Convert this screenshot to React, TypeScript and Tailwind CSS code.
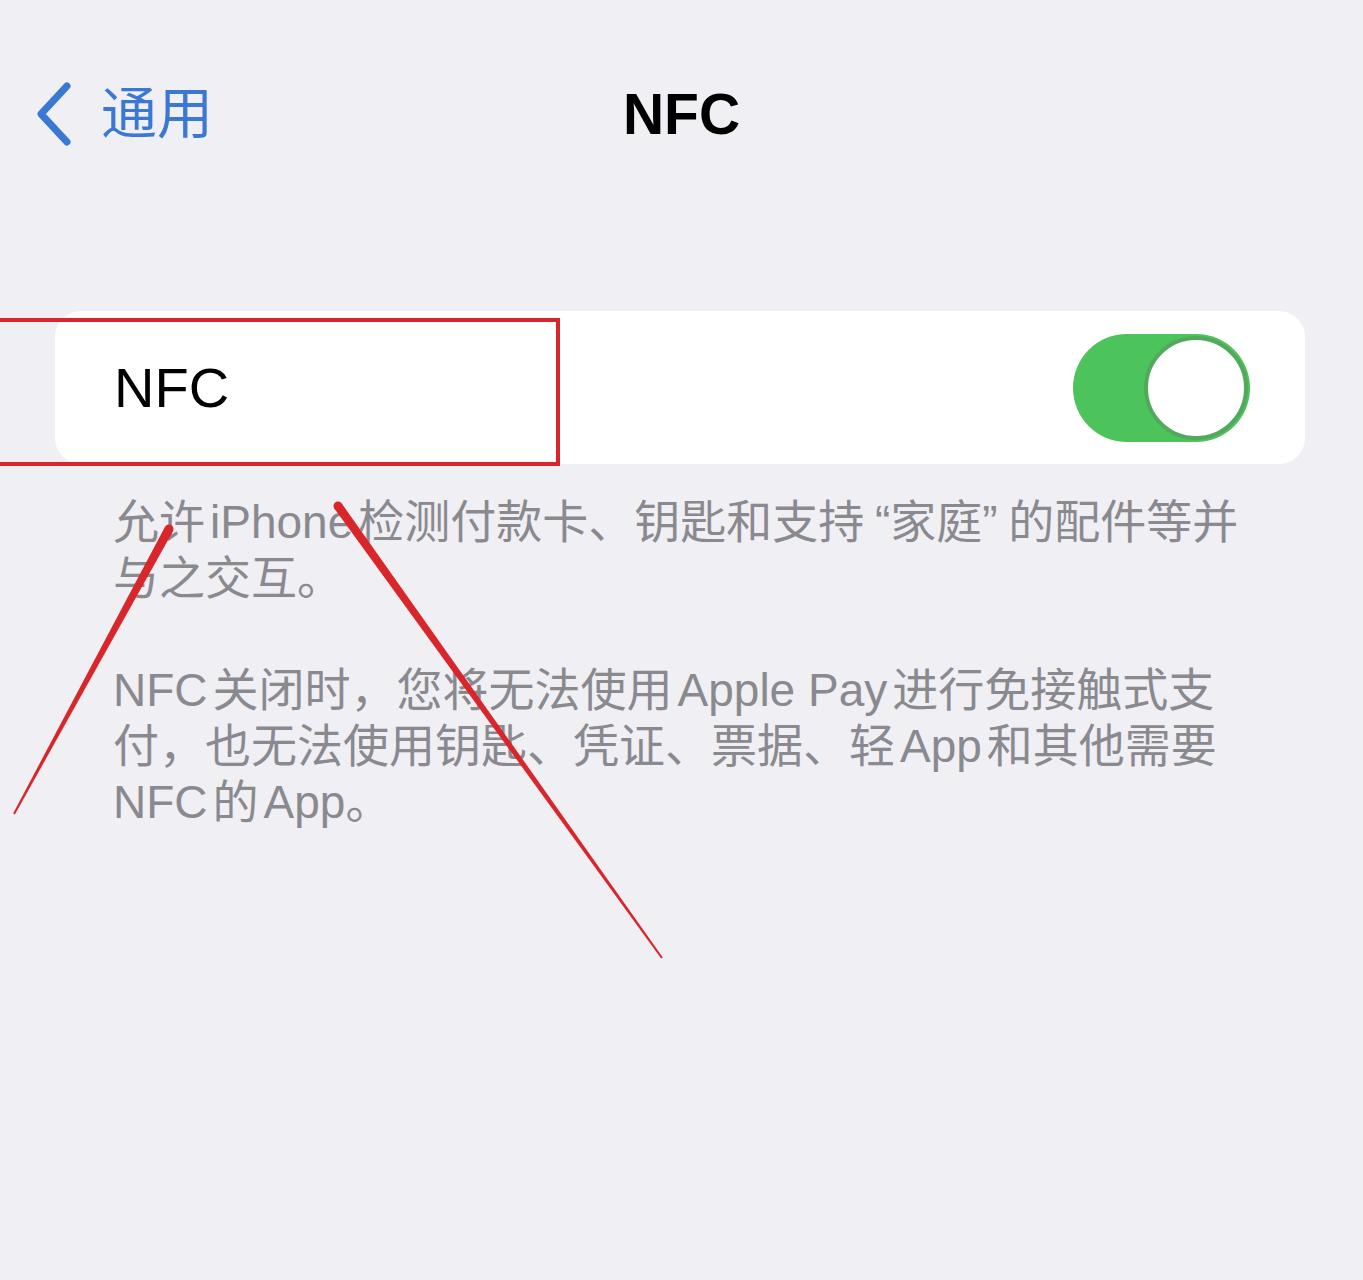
import React from "react";

const font = { fontFamily: '"Liberation Sans", "Noto Sans CJK SC", sans-serif' };

// tapered brush stroke: thick at the tip, thin at the tail
function Stroke({ tip, tail, w0, w1 }: { tip: [number, number]; tail: [number, number]; w0: number; w1: number }) {
  const dx = tail[0] - tip[0];
  const dy = tail[1] - tip[1];
  const len = Math.hypot(dx, dy);
  const nx = -dy / len;
  const ny = dx / len;
  const pts = [
    [tip[0] + (nx * w0) / 2, tip[1] + (ny * w0) / 2],
    [tail[0] + (nx * w1) / 2, tail[1] + (ny * w1) / 2],
    [tail[0] - (nx * w1) / 2, tail[1] - (ny * w1) / 2],
    [tip[0] - (nx * w0) / 2, tip[1] - (ny * w0) / 2],
  ]
    .map((p) => p.join(","))
    .join(" ");
  return (
    <>
      <polygon points={pts} fill="#d8262b" />
      <circle cx={tip[0]} cy={tip[1]} r={w0 / 2} fill="#d8262b" />
    </>
  );
}

// latin run inside CJK text, with the small auto-spacing iOS adds around it
function Latin({ children }: { children: React.ReactNode }) {
  return <span className="mx-[5px]">{children}</span>;
}

function Toggle() {
  return (
    <div className="flex h-[108px] w-[177px] items-center justify-end rounded-full bg-[#4cc35b] p-[2px]">
      <div className="h-[104px] w-[104px] rounded-full border-[4px] border-[#52a95c] bg-white" />
    </div>
  );
}

export default function App() {
  return (
    <div className="relative h-[1280px] w-[1363px] overflow-hidden bg-[#f0eff4]" style={font}>
      {/* nav bar */}
      <header className="mt-[81px] grid h-[60px] grid-cols-[1fr_auto_1fr] items-center">
        <div className="flex items-center pl-[33px] text-[#3a78d2]">
          <svg width="42" height="66" viewBox="0 0 42 66" fill="none">
            <path d="M34 5 L8 33 L34 61" stroke="currentColor" strokeWidth="7" strokeLinecap="round" strokeLinejoin="round" />
          </svg>
          <span className="ml-[26px] text-[56px] leading-none">通用</span>
        </div>
        <h1 className="text-[57px] font-bold leading-none text-black">NFC</h1>
        <div />
      </header>

      {/* switch cell */}
      <section className="ml-[55px] mt-[170px] flex h-[153px] w-[1250px] items-center justify-between rounded-[26px] bg-white pl-[59px] pr-[55px]">
        <span className="text-[56px] leading-none text-black">NFC</span>
        <Toggle />
      </section>

      {/* footer note */}
      <div className="ml-[113px] mt-[30px] whitespace-nowrap text-[46px] leading-[56px] text-[#8a8a8e]">
        <p>
          允许<Latin>iPhone</Latin>检测付款卡、钥匙和支持
          <span className="inline-block w-[26px] text-right">“</span>家庭
          <span className="inline-block w-[26px] text-left">”</span>的配件等并
        </p>
        <p>与之交互。</p>
        <p className="mt-[56px]">
          <span className="mr-[5px]">NFC</span>关闭时，您将无法使用<Latin>Apple Pay</Latin>进行免接触式支
        </p>
        <p>
          付，也无法使用钥匙、凭证、票据、轻<Latin>App</Latin>和其他需要
        </p>
        <p>
          <span className="mr-[5px]">NFC</span>的<Latin>App</Latin>
          <span className="-ml-[5px]">。</span>
        </p>
      </div>

      {/* red annotation box */}
      <div className="absolute left-[-10px] top-[318px] h-[148px] w-[570px] border-[4px] border-[#d8262b]" />

      {/* red annotation arrows */}
      <svg className="pointer-events-none absolute inset-0" width="1363" height="1280">
        <Stroke tip={[169, 529]} tail={[14, 814]} w0={9} w1={2} />
        <Stroke tip={[338, 506]} tail={[662, 958]} w0={9} w1={2} />
      </svg>
    </div>
  );
}
